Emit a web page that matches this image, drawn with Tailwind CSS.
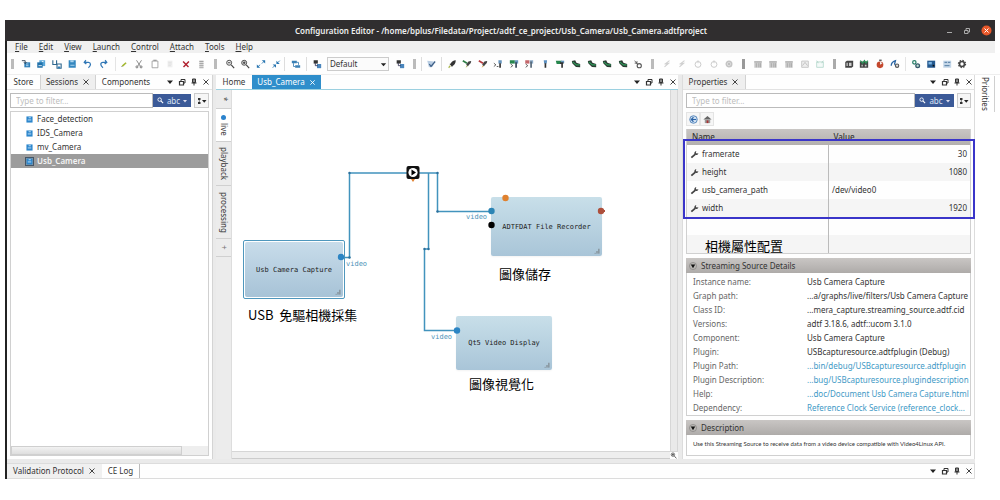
<!DOCTYPE html>
<html lang="en">
<head>
<meta charset="utf-8">
<title>Configuration Editor</title>
<script src="https://cdn.jsdelivr.net/npm/@tailwindcss/browser@4"></script>
</head>
<body class="bg-white font-['Noto_Sans','Noto_Sans_CJK_TC',sans-serif] text-[8px] leading-[14px] text-[#333]">
<svg class="hidden" aria-hidden="true">
  <symbol id="open" viewBox="0 0 12 12"><path d="M4 4h7v6H4z" fill="#2f7fb8"/><path d="M1 2h4M5 2v3M3.500 4L5 5.500 6.500 4" stroke="#234" fill="none"/><path d="M6 6h3M6 8h3" stroke="#bfe0f5"/></symbol>
  <symbol id="saveall" viewBox="0 0 12 12"><path d="M4 1.500h7v7H4z" fill="#5aa7d8"/><path d="M1.500 4h6.500v6.500H1.500z" fill="#2272ab"/><path d="M3 8h4M7 3h2" stroke="#fff"/></symbol>
  <symbol id="saveas" viewBox="0 0 12 12"><path d="M1 1.500v5h4.500v-5M6 6h5v5H6z" stroke="#2d668e" stroke-width="1.300" fill="none"/><path d="M7 9h3v2H7z" fill="#2f7fb8"/></symbol>
  <symbol id="save" viewBox="0 0 12 12"><path d="M2 1.500h8.500v9H2z" fill="#3487bf"/><path d="M4 1.500h4v2.500H4zM4 7h5v1H4z" fill="#a9d3ee"/></symbol>
  <symbol id="undo" viewBox="0 0 12 12"><path d="M3.500 1.500L1.500 4l2.500 2M2 4h4.500c3 0 3.500 4 0 6.500" stroke="#2f76b5" stroke-width="1.500" fill="none"/></symbol>
  <symbol id="redo" viewBox="0 0 12 12"><path d="M8.500 1.500l2 2.500L8 6M10 4H6c-3.500 0-3.500 4 0 6.500" stroke="#2f76b5" stroke-width="1.500" fill="none"/></symbol>
  <symbol id="pencil" viewBox="0 0 12 12"><path d="M4 8.500l4.500-4" stroke="#a3b82e" stroke-width="2"/><path d="M3 9.500l1-1" stroke="#555"/></symbol>
  <symbol id="cut" viewBox="0 0 12 12"><path d="M3 1.500l4.500 7M9 1.500L4.500 8.500" stroke="#777" fill="none"/><circle cx="3.500" cy="9.500" r="1.200" stroke="#666" fill="none"/><circle cx="8.500" cy="9.500" r="1.200" stroke="#666" fill="none"/></symbol>
  <symbol id="copy" viewBox="0 0 12 12"><path d="M2.500 2.500h7v8h-7z" stroke="#999" fill="#fff"/><path d="M4 1.500h4" stroke="#777"/></symbol>
  <symbol id="paste" viewBox="0 0 12 12"><path d="M3 2h6v8H3z" fill="#f0f0f0"/><path d="M4 4h4M4 6h4M4 8h3" stroke="#ddd"/></symbol>
  <symbol id="del" viewBox="0 0 12 12"><path d="M2.500 3l6.500 6.500M9.500 3L3 9.500" stroke="#b0202e" stroke-width="1.700"/></symbol>
  <symbol id="list" viewBox="0 0 12 12"><path d="M4 1.500h5v9H4z" fill="#ddd"/><path d="M4 3h5M4 5.500h5M4 8h5M4 10.500h5" stroke="#999"/></symbol>
  <symbol id="zout" viewBox="0 0 12 12"><circle cx="5" cy="4.500" r="3" stroke="#555" stroke-width="1.200" fill="#eee"/><path d="M3.500 4.500h3M7.500 7l3.500 4" stroke="#444" stroke-width="1.400"/></symbol>
  <symbol id="zin" viewBox="0 0 12 12"><circle cx="5" cy="4.500" r="3" stroke="#555" stroke-width="1.200" fill="#ddd"/><path d="M3.500 4.500h3M5 3v3M7.500 7l3.500 4" stroke="#444" stroke-width="1.400"/></symbol>
  <symbol id="fit" viewBox="0 0 12 12"><path d="M7 1.500h4v4zM1 6.500v4h4z" fill="#2674b0"/><path d="M9.500 3L7 5.500M2.500 9L5 7" stroke="#2674b0"/></symbol>
  <symbol id="fit2" viewBox="0 0 12 12"><path d="M6.500 2v4h4zM2 6.500h4v4z" fill="#2674b0"/><path d="M8 4.500L10.500 2M4.500 8L2 10.500" stroke="#2674b0"/></symbol>
  <symbol id="tree" viewBox="0 0 12 12"><path d="M1 2h6v3H1zM5 7.500h6v3H5z" fill="#3a80b5"/><path d="M3 5v4h2M9 7V4H7" stroke="#3a80b5" fill="none"/></symbol>
  <symbol id="flow" viewBox="0 0 12 12"><path d="M2 1.500h5v4H2z" fill="#333"/><path d="M6 6h5v5H6z" fill="#4a86bd"/><path d="M4 5v3h3" stroke="#335" fill="none"/></symbol>
  <symbol id="check" viewBox="0 0 12 12"><path d="M1.500 2l8 1-1 6-5 1z" fill="#b9cde2"/><path d="M4 6l2 3 5-6" stroke="#3d5f88" stroke-width="1.500" fill="none"/></symbol>
  <symbol id="rocket" viewBox="0 0 12 12"><path d="M10.500 1.500c-3 0-5 2-6 4L3 6l1.500 1.500L6 9.500 7 8c2-1 3.500-3 3.500-6.500z" fill="#333"/><path d="M4 8l-2 2.500" stroke="#a8b54a" stroke-width="1.500"/></symbol>
  <symbol id="rocketg" viewBox="0 0 12 12"><path d="M11 2.500c-3 0-4 1-5 3l-1 1.500L7 9l1.500-2C10 6 11 5 11 2.500z" fill="#444"/><path d="M1 2l5 3" stroke="#2e7d46" stroke-width="2"/><path d="M6 8l-1 2" stroke="#a8b54a"/></symbol>
  <symbol id="rocketr" viewBox="0 0 12 12"><path d="M11 2.500c-3 0-4 1-5 3l-1 1.500L7 9l1.500-2C10 6 11 5 11 2.500z" fill="#444"/><path d="M1 2l5 3" stroke="#b63a3f" stroke-width="2"/><path d="M6 8l-1 2" stroke="#e2a33a"/></symbol>
  <symbol id="step" viewBox="0 0 12 12"><path d="M1 5l2.500 2L1 9M4.500 9h2" stroke="#444" fill="none"/><path d="M6.500 1.500h4v4h-4z" fill="#6694bd"/><path d="M8.500 5v5.500" stroke="#333" stroke-width="2"/></symbol>
  <symbol id="stepg" viewBox="0 0 12 12"><path d="M1 1.500h6v4H1z" fill="#27864d"/><path d="M7 1.500h4v4H7z" fill="#6694bd"/><path d="M2 6l2.500 2L2 10" stroke="#444" fill="none"/><path d="M8.500 4v6.500" stroke="#345" stroke-width="2"/></symbol>
  <symbol id="stepr" viewBox="0 0 12 12"><path d="M1.500 1.500h5v4h-5z" fill="#c4666a"/><path d="M7 1.500h4v4H7z" fill="#8aa9c6"/><path d="M2 6l2.500 2L2 10" stroke="#444" fill="none"/><path d="M8.500 3v7.500" stroke="#567" stroke-width="2"/></symbol>
  <symbol id="torch" viewBox="0 0 12 12"><path d="M4.500 1.500h4l-.500 4H5z" fill="#5b8fc0"/><path d="M6.500 5v5.500" stroke="#333" stroke-width="2"/></symbol>
  <symbol id="torchg" viewBox="0 0 12 12"><path d="M1 2h7v4H2z" fill="#27864d"/><path d="M7 2h4v3H7z" fill="#6694bd"/><path d="M6 5h4M8.500 4v6.500" stroke="#333" stroke-width="2"/></symbol>
  <symbol id="chip" viewBox="0 0 12 12"><path d="M1 2.500l4-1 1.500 3L11 6v4L6 9.500 1.500 5z" fill="#2b3b33"/><path d="M2 3.500l4.500 3.500h4" stroke="#2e9c5a" stroke-width="1.300" fill="none"/></symbol>
  <symbol id="links" viewBox="0 0 12 12"><circle cx="7.500" cy="8" r="2.500" stroke="#555" stroke-width="1.300" fill="none"/><path d="M2 2l3 4M2 5h4M5 2.500L4 5" stroke="#555" fill="none"/></symbol>
  <symbol id="run" viewBox="0 0 12 12"><path d="M9 2L5 5h3L3 9.500M3 6h3" stroke="#d0d0d0" stroke-width="1.300" fill="none"/></symbol>
  <symbol id="ring" viewBox="0 0 12 12"><circle cx="6" cy="6.500" r="3.500" stroke="#ccc" stroke-width="1.200" fill="none"/><path d="M6 1.500V5" stroke="#ccc"/></symbol>
  <symbol id="disc" viewBox="0 0 12 12"><circle cx="6" cy="6" r="3.300" stroke="#c4c4c4" stroke-width="1.800" fill="#ddd"/><circle cx="6" cy="6" r="1" fill="#999"/></symbol>
  <symbol id="gwin" viewBox="0 0 12 12"><path d="M1.500 2.500h9v8h-9z" fill="#ccc"/><path d="M1.500 3.500h9M4 5v5M7 5v5M9 5v5" stroke="#a6a6a6" fill="none"/></symbol>
  <symbol id="gwin2" viewBox="0 0 12 12"><path d="M2 2.500h8v7.500H2z" stroke="#c2c2c2" fill="#eee"/><path d="M3 8l3-4 3 4" stroke="#bbb" fill="none"/></symbol>
  <symbol id="gwin3" viewBox="0 0 12 12"><path d="M2 3.500h8v6.500H2z" stroke="#b4d8cd" fill="#f4faf8"/><path d="M2 2l2 3M10 2L8 5" stroke="#aacfc3"/></symbol>
  <symbol id="film" viewBox="0 0 12 12"><path d="M1.500 3.500l2-1.500H11v7l-2 1.500H1.500z" fill="#444"/><path d="M3 4.500h1.500v4H3zM6 4.500h3v4H6z" fill="#ccc"/></symbol>
  <symbol id="cal" viewBox="0 0 12 12"><path d="M1 3h10v7.500H1z" fill="#444"/><path d="M1.500 2l3 3 2-3 2 3 2-3" stroke="#2c9259" stroke-width="1.500" fill="none"/><path d="M3 7h1.500v2H3zM7 7h2v2H7z" fill="#ccc"/></symbol>
  <symbol id="timer" viewBox="0 0 12 12"><circle cx="6" cy="7" r="4" fill="#c4482d"/><path d="M6 7V3l3 2z" fill="#eee"/><path d="M5 1.500h3" stroke="#444" stroke-width="1.500"/></symbol>
  <symbol id="meter" viewBox="0 0 12 12"><path d="M1.500 8c0-3 2-5 5-6l-1 4 2 3" stroke="#2d67a5" stroke-width="1.600" fill="none"/><circle cx="8.500" cy="8" r="2" stroke="#555" stroke-width="1.300" fill="#ddd"/></symbol>
  <symbol id="gearg" viewBox="0 0 12 12"><circle cx="4" cy="4" r="2" stroke="#2a7f69" stroke-width="1.500" fill="none"/><circle cx="8" cy="8" r="2.200" stroke="#38586c" stroke-width="1.600" fill="#bfe3d0"/></symbol>
  <symbol id="screen" viewBox="0 0 12 12"><path d="M1.500 2h9.500v8.500H1.500z" fill="#24598f"/><path d="M3 3.500h4v3H3z" fill="#7cb4e0"/><path d="M8 7h2v2H8z" fill="#111"/></symbol>
  <symbol id="screen2" viewBox="0 0 12 12"><path d="M1.500 2h9.500v8.500H1.500z" fill="#c3d6e8"/><path d="M3 4h3M7 4h3M3 8h6" stroke="#3d6a94"/></symbol>
  <symbol id="gear" viewBox="0 0 12 12"><circle cx="6" cy="6" r="4.300" stroke="#444" stroke-width="1.400" stroke-dasharray="1.700 1.670" fill="none"/><circle cx="6" cy="6" r="3" stroke="#444" stroke-width="2" fill="#fff"/></symbol>
  <symbol id="down" viewBox="0 0 8 8"><path d="M1 2.500h6L4 6z" fill="#222"/></symbol>
  <symbol id="float" viewBox="0 0 8 8"><path d="M3 1.500h4v3.500H3z" fill="#fff" stroke="#333"/><path d="M1.500 3.500h4V7h-4z" fill="#fff" stroke="#333" stroke-width="1.200"/></symbol>
  <symbol id="pin" viewBox="0 0 8 8"><path d="M2.500 1h3v3.500h-3z" fill="#888" stroke="#333"/><path d="M1.500 5h5M4 5v2.500" stroke="#333"/></symbol>
  <symbol id="x" viewBox="0 0 8 8"><path d="M1.500 1.500l5 5M6.500 1.500l-5 5" stroke="#444" fill="none"/></symbol>
  <symbol id="find" viewBox="0 0 8 8"><circle cx="3" cy="3" r="2" stroke="#fff" fill="none"/><path d="M4.500 4.500L7 7" stroke="#fff" stroke-width="1.300"/></symbol>
  <symbol id="opts" viewBox="0 0 10 8"><path d="M1 1h2.500v2H1zM1 5h2.500v2H1z" fill="#333"/><path d="M2.300 3v2" stroke="#777"/><path d="M5 3h4.500L7.250 5.800z" fill="#222"/></symbol>
  <symbol id="session" viewBox="0 0 8 8"><path d="M.500.500h7v7h-7z" fill="#2c86cc"/><path d="M2 4.500h4M3 2h2.500" stroke="#cfe8fa"/></symbol>
  <symbol id="wrench" viewBox="0 0 10 10"><path d="M1.500 8.500L6 4.500" stroke="#444" stroke-width="2"/><path d="M7 1C5 1.500 4.500 3 5 4.500L6.500 5.500C8 5.800 9 5 9.300 3.500L7.500 4 6.500 3z" fill="#444"/></symbol>
  <symbol id="fold" viewBox="0 0 9 9"><circle cx="4.500" cy="4.500" r="4" fill="#bab8b5" stroke="#807d7a" stroke-width=".700"/><path d="M2 2.700h5L4.500 7z" fill="#111"/></symbol>
  <symbol id="grip" viewBox="0 0 8 8"><path d="M1.500 7.500v-1M4 7.500V4M6.500 7.500V1" stroke="#666"/></symbol>
</svg>

<div class="flex h-screen flex-col pt-5 pb-[21px] pl-[5px]">
  <header class="mr-[5px] flex h-[21px] shrink-0 items-center bg-[#302e2f] text-white">
    <div class="w-14"></div>
    <h1 class="flex-1 pl-0.5 text-center font-semibold whitespace-nowrap text-[#eee]">Configuration Editor - /home/bplus/Filedata/Project/adtf_ce_project/Usb_Camera/Usb_Camera.adtfproject</h1>
    <div class="flex w-14 items-center justify-end gap-2.5 pr-[3px]">
      <button aria-label="Minimize"><svg class="size-2" viewBox="0 0 8 8"><path d="M2 5.500h5" stroke="#aaa"/></svg></button>
      <button aria-label="Restore"><svg class="size-2" viewBox="0 0 8 8"><path d="M1.500 3.500h3.500V6.500H1.500zM3 3V1.500h3.500V5H5" stroke="#aaa" fill="none"/></svg></button>
      <button aria-label="Close"><svg class="size-[11px]" viewBox="0 0 11 11"><circle cx="5.500" cy="5.500" r="5" fill="#e8582a"/><path d="M3.500 3.500l4 4M7.500 3.500l-4 4" stroke="#fff"/></svg></button>
    </div>
  </header>

  <div class="flex min-h-0 flex-1 flex-col border-l-2 border-[#222]">
    <nav class="mr-[5px] flex h-3 shrink-0 items-center gap-[11px] bg-[#f0f0f0] pl-2 leading-3">
      <button><u>F</u>ile</button><button><u>E</u>dit</button><button><u>V</u>iew</button><button><u>L</u>aunch</button><button><u>C</u>ontrol</button><button><u>A</u>ttach</button><button><u>T</u>ools</button><button><u>H</u>elp</button>
    </nav>

    <div class="flex h-[22px] shrink-0 items-center border-b border-[#eee] bg-[#fefefe] [&_button]:flex [&_button]:flex-1 [&_button]:justify-center [&_button_svg]:size-[10px]">
      <i class="ml-1 mr-1 h-2.5 w-[3px] bg-[#bbb]"></i>
      <div class="flex w-[93px]">
        <button aria-label="Open"><svg><use href="#open"/></svg></button><button aria-label="Save all"><svg><use href="#saveall"/></svg></button><button aria-label="Save as"><svg><use href="#saveas"/></svg></button><button aria-label="Save"><svg><use href="#save"/></svg></button><button aria-label="Undo"><svg><use href="#undo"/></svg></button><button aria-label="Redo"><svg><use href="#redo"/></svg></button>
      </div>
      <i class="ml-1 h-3.5 w-px bg-[#e4e4e4]"></i>
      <div class="flex w-[93px]">
        <button aria-label="Edit"><svg><use href="#pencil"/></svg></button><button aria-label="Cut"><svg><use href="#cut"/></svg></button><button aria-label="Copy"><svg><use href="#copy"/></svg></button><button aria-label="Paste"><svg><use href="#paste"/></svg></button><button aria-label="Delete"><svg><use href="#del"/></svg></button><button aria-label="Select all"><svg><use href="#list"/></svg></button>
      </div>
      <i class="mx-[5px] h-2.5 w-[3px] bg-[#bbb]"></i>
      <div class="flex w-[62px]">
        <button aria-label="Zoom out"><svg><use href="#zout"/></svg></button><button aria-label="Zoom in"><svg><use href="#zin"/></svg></button><button aria-label="Fit"><svg><use href="#fit"/></svg></button><button aria-label="Shrink"><svg><use href="#fit2"/></svg></button>
      </div>
      <i class="mr-[3px] h-3.5 w-px bg-[#ddd]"></i>
      <div class="flex w-4"><button aria-label="Layout"><svg><use href="#tree"/></svg></button></div>
      <i class="mx-[2px] h-3.5 w-px bg-[#ddd]"></i>
      <div class="flex w-4"><button aria-label="Routing"><svg><use href="#flow"/></svg></button></div>
      <div class="relative ml-[2px] flex">
        <select aria-label="Configuration" class="h-[14px] w-[62px] appearance-none border border-[#ccc] bg-[#fbfbfb] pl-[2px] leading-3"><option>Default</option></select>
        <svg class="pointer-events-none absolute top-[4px] right-[2px] size-[7px]"><use href="#down"/></svg>
      </div>
      <div class="ml-[3px] flex w-4"><button aria-label="Edit configuration"><svg><use href="#flow"/></svg></button></div>
      <i class="mx-[5px] h-2.5 w-[3px] bg-[#bbb]"></i>
      <i class="mr-px h-3.5 w-px bg-[#ddd]"></i>
      <div class="flex w-4"><button aria-label="Validate"><svg><use href="#check"/></svg></button></div>
      <i class="mx-[2px] h-3.5 w-px bg-[#ddd]"></i>
      <div class="flex w-[202px]">
        <button aria-label="Launch"><svg><use href="#rocket"/></svg></button><button aria-label="Launch run"><svg><use href="#rocketg"/></svg></button><button aria-label="Launch debug"><svg><use href="#rocketr"/></svg></button><button aria-label="Console"><svg><use href="#step"/></svg></button><button aria-label="Console run"><svg><use href="#stepg"/></svg></button><button aria-label="Console debug"><svg><use href="#stepr"/></svg></button><button aria-label="Control"><svg><use href="#torch"/></svg></button><button aria-label="Control run"><svg><use href="#torchg"/></svg></button><button aria-label="Target 1"><svg><use href="#chip"/></svg></button><button aria-label="Target 2"><svg><use href="#chip"/></svg></button><button aria-label="Target 3"><svg><use href="#chip"/></svg></button><button aria-label="Target 4"><svg><use href="#chip"/></svg></button><button aria-label="Attach"><svg><use href="#links"/></svg></button>
      </div>
      <i class="mx-[5px] h-2.5 w-[3px] bg-[#bbb]"></i>
      <div class="flex w-[78px]">
        <button aria-label="Shutdown" disabled><svg><use href="#run"/></svg></button><button aria-label="Startup" disabled><svg><use href="#run"/></svg></button><button aria-label="Init" disabled><svg><use href="#ring"/></svg></button><button aria-label="Start" disabled><svg><use href="#ring"/></svg></button><button aria-label="Record" disabled><svg><use href="#disc"/></svg></button>
      </div>
      <i class="mx-[5px] h-2.5 w-[3px] bg-[#999]"></i>
      <div class="flex w-[78px]">
        <button aria-label="Window 1" disabled><svg><use href="#gwin"/></svg></button><button aria-label="Window 2" disabled><svg><use href="#gwin"/></svg></button><button aria-label="Window 3" disabled><svg><use href="#gwin"/></svg></button><button aria-label="Window 4" disabled><svg><use href="#gwin2"/></svg></button><button aria-label="Window 5" disabled><svg><use href="#gwin3"/></svg></button>
      </div>
      <i class="mx-[5px] h-2.5 w-[3px] bg-[#aaa]"></i>
      <div class="flex w-[62px]">
        <button aria-label="Video"><svg><use href="#film"/></svg></button><button aria-label="Schedule"><svg><use href="#cal"/></svg></button><button aria-label="Timer"><svg><use href="#timer"/></svg></button><button aria-label="Profiler"><svg><use href="#meter"/></svg></button>
      </div>
      <i class="mx-[2px] h-3.5 w-px bg-[#e4e4e4]"></i>
      <div class="flex w-[62px]">
        <button aria-label="Plugins"><svg><use href="#gearg"/></svg></button><button aria-label="Display"><svg><use href="#screen"/></svg></button><button aria-label="Report"><svg><use href="#screen2"/></svg></button><button aria-label="Settings"><svg><use href="#gear"/></svg></button>
      </div>
    </div>

    <div class="flex min-h-0 flex-1">
      <div class="flex min-w-0 flex-1 flex-col">
        <main class="flex min-h-0 flex-1 bg-[#eaeaea] pb-1">
          <!-- sessions dock -->
          <section class="flex w-[206px] flex-col border-r border-[#d4d4d4] bg-[#fefefe]">
            <div class="flex h-[15px] shrink-0 items-stretch border-b border-[#e2e2e2]">
              <button class="w-[33px]">Store</button>
              <button class="flex w-14 items-center justify-center gap-1 border-x border-[#d2d2d2] bg-[#efefef]">Sessions <svg class="size-2"><use href="#x"/></svg></button>
              <button class="w-[60px]">Components</button>
              <div class="flex flex-1 items-center justify-end gap-1 pr-[2px] [&_svg]:size-2">
                <button aria-label="Menu"><svg><use href="#down"/></svg></button><button aria-label="Float"><svg><use href="#float"/></svg></button><button aria-label="Pin"><svg><use href="#pin"/></svg></button><button aria-label="Close"><svg><use href="#x"/></svg></button>
              </div>
            </div>
            <div class="mx-[3px] mt-[3px] flex h-[15px] shrink-0 items-center">
              <input aria-label="Filter sessions" placeholder="Type to filter..." class="h-[15px] min-w-0 flex-1 border border-[#bbb] bg-white pl-[5px] placeholder:text-[#bdbdbd]">
              <button class="flex h-[13px] w-[38px] items-center justify-center gap-[3px] bg-[#3b5a98] leading-[13px] text-[#dbe5f5]"><svg class="size-[7px]"><use href="#find"/></svg>abc<svg class="size-1" viewBox="0 0 4 4"><path d="M0 1h4L2 3.500z" fill="#dde"/></svg></button>
              <button aria-label="Options" class="ml-[3px] flex h-[15px] w-[15px] items-center justify-center border border-[#ccc] bg-[#f6f6f6]"><svg class="h-2 w-2.5"><use href="#opts"/></svg></button>
            </div>
            <div class="mx-[3px] mt-[3px] mb-[3px] flex flex-1 flex-col border border-[#d0d0d0] bg-white text-[#333]">
              <ul class="flex-1 [&>li]:flex [&>li]:h-3.5 [&>li]:items-center [&>li]:gap-1 [&>li]:pl-[15px] [&_svg]:size-[7px]">
                <li><svg><use href="#session"/></svg>Face_detection</li>
                <li><svg><use href="#session"/></svg>IDS_Camera</li>
                <li><svg><use href="#session"/></svg>mv_Camera</li>
                <li class="bg-[#9c9c9c] font-semibold text-[#f4f4f4]"><svg class="outline outline-[#456]"><use href="#session"/></svg>Usb_Camera</li>
              </ul>
              <div class="h-[9px] bg-[#eee]"><div class="h-[9px] w-[87%] border border-[#cfcfcf] bg-linear-to-b from-[#f2f2f2] to-[#dedede]"></div></div>
            </div>
          </section>

          <!-- graph editor -->
          <section class="ml-[3px] flex min-w-0 flex-1 flex-col bg-[#fefefe]">
            <div class="flex h-[15px] shrink-0 border-b border-[#9bd0e0]">
              <button class="w-9">Home</button>
              <button class="flex w-[69px] items-center justify-center gap-1 bg-[#2f8ecb] text-white">Usb_Camera <svg class="size-[7px]" viewBox="0 0 8 8"><path d="M1.500 1.500l5 5M6.500 1.500l-5 5" stroke="#fff"/></svg></button>
              <div class="flex flex-1 items-center justify-end gap-1 pr-px [&_svg]:size-2">
                <button aria-label="Menu"><svg><use href="#down"/></svg></button><button aria-label="Float"><svg><use href="#float"/></svg></button><button aria-label="Pin"><svg><use href="#pin"/></svg></button><button aria-label="Close"><svg><use href="#x"/></svg></button>
              </div>
            </div>
            <div class="flex min-h-0 flex-1">
              <div class="flex w-4 flex-col border-r border-[#ddd] bg-[#ececec] [&>button]:flex [&>button]:items-center [&>button]:justify-center [&>button]:border-b [&>button]:border-[#d0d0d0] [&>button]:[writing-mode:vertical-rl]">
                <button class="h-[19px] text-[#555]">*</button>
                <button class="h-[33px] gap-[3px] bg-white"><i class="size-[5px] rounded-full bg-[#2b83cd]"></i>live</button>
                <button class="h-11">playback</button>
                <button class="h-[53px]">processing</button>
                <button class="h-[18px] text-[#777]">+</button>
              </div>
              <div class="flex min-w-0 flex-1 flex-col">
                <div class="flex min-h-0 flex-1">
                  <div class="relative flex-1 overflow-hidden bg-white font-['DejaVu_Sans_Mono',monospace] text-[7px] leading-[10px] text-[#222]">
                    <div class="absolute top-[150px] left-[11px] h-[59px] w-[102px] rounded-xs border border-[#4f97bd] bg-white p-px"><div class="flex h-full items-center justify-center rounded-xs bg-linear-to-b from-[#c8dcea] to-[#a7c3d7]">Usb Camera Capture</div></div>
                    <div class="absolute top-[107px] left-[259px] flex h-[59px] w-[111px] items-center justify-center rounded-xs bg-linear-to-b from-[#c8dfe9] to-[#a9c5d8] shadow-xs">ADTFDAT File Recorder</div>
                    <div class="absolute top-[226px] left-[224px] flex h-[54px] w-[96px] items-center justify-center rounded-xs bg-linear-to-b from-[#c8dfe9] to-[#a9c5d8] shadow-xs">Qt5 Video Display</div>
                    <svg class="absolute top-0 left-0 h-[361px] w-[438px]" viewBox="0 0 438 361" fill="none">
                      <g stroke="#4293bd" stroke-width="1.500"><path d="M109 167.500h8.500v-84.500H205.500v38.500H260"/><path d="M196.500 83v76h-4v81.500H226"/></g>
                      <g fill="#2b6f9c"><circle cx="117.500" cy="167.500" r="1.200"/><circle cx="117.500" cy="83" r="1.200"/><circle cx="205.500" cy="83" r="1.200"/><circle cx="205.500" cy="121.500" r="1.200"/><circle cx="196.500" cy="159" r="1.200"/><circle cx="192.500" cy="159" r="1.200"/></g>
                      <circle cx="109" cy="167" r="3.200" fill="#2c85c4"/><circle cx="259.500" cy="121" r="3.200" fill="#2c85b5"/><circle cx="225" cy="240.500" r="3.200" fill="#2c85c4"/>
                      <circle cx="259.500" cy="135" r="3.200" fill="#000"/><circle cx="273.500" cy="108" r="3.200" fill="#e0812f"/><path d="M369 121h4" stroke="#ad4f3b" stroke-width="2"/><circle cx="369" cy="121" r="3.200" fill="#ad4f3b"/>
                      <path d="M179 89h4l-2 3z" fill="#e0812f"/><rect x="174.500" y="76" width="13" height="13" rx="2" fill="#111"/><circle cx="181" cy="82.500" r="4.600" fill="#fff"/><path d="M179.500 79.500v6l4.500-3z" fill="#000"/>
                    </svg>
                    <span class="absolute top-[169px] left-[114px] text-[#4b93b8]">video</span>
                    <span class="absolute top-[122px] left-[234px] text-[#4b93b8]">video</span>
                    <span class="absolute top-[242px] left-[199px] text-[#4b93b8]">video</span>
                    <svg class="absolute top-[199px] left-[103px] size-1.5"><use href="#grip"/></svg>
                    <svg class="absolute top-[158px] left-[362px] size-1.5"><use href="#grip"/></svg>
                    <svg class="absolute top-[272px] left-[312px] size-1.5"><use href="#grip"/></svg>
                    <div class="font-['Noto_Sans_CJK_TC',sans-serif] text-[13px] leading-5 whitespace-pre text-black">
                      <p class="absolute top-[215px] left-4">USB  免驅相機採集</p>
                      <p class="absolute top-[174px] left-[267px]">圖像儲存</p>
                      <p class="absolute top-[284px] left-[237px]">圖像視覺化</p>
                    </div>
                  </div>
                  <div class="w-2 border-x border-[#d6d6d6] bg-[#e9e9e9]"></div>
                </div>
                <div class="flex h-2 border-t border-[#d6d6d6]">
                  <div class="flex-1 border-b border-[#ccc] bg-[#eee]"></div>
                  <button aria-label="Overview" class="flex w-2"><svg class="size-[7px]"><use href="#zin"/></svg></button>
                </div>
              </div>
            </div>
          </section>

          <!-- properties dock -->
          <section class="relative ml-1 flex w-[293px] flex-col border-x border-[#dcdcdc] bg-[#fefefe]">
            <div class="flex h-[15px] shrink-0 border-b border-[#e2e2e2]">
              <button class="flex w-[63px] items-center justify-center gap-1 border-r border-[#d2d2d2] bg-[#efefef]">Properties <svg class="size-2"><use href="#x"/></svg></button>
              <div class="flex flex-1 items-center justify-end gap-1 pr-px [&_svg]:size-2">
                <button aria-label="Menu"><svg><use href="#down"/></svg></button><button aria-label="Float"><svg><use href="#float"/></svg></button><button aria-label="Pin"><svg><use href="#pin"/></svg></button><button aria-label="Close"><svg><use href="#x"/></svg></button>
              </div>
            </div>
            <div class="mx-[3px] mt-[3px] flex h-[15px] shrink-0 items-center">
              <input aria-label="Filter properties" placeholder="Type to filter..." class="h-[15px] min-w-0 flex-1 border border-[#bbb] bg-white pl-[5px] placeholder:text-[#bdbdbd]">
              <button class="flex h-[13px] w-[39px] items-center justify-center gap-[3px] bg-[#3b5a98] leading-[13px] text-[#dbe5f5]"><svg class="size-[7px]"><use href="#find"/></svg>abc<svg class="size-1" viewBox="0 0 4 4"><path d="M0 1h4L2 3.500z" fill="#dde"/></svg></button>
              <button aria-label="Options" class="ml-[3px] flex h-[15px] w-[14px] items-center justify-center border border-[#ccc] bg-[#f6f6f6]"><svg class="h-2 w-2.5"><use href="#opts"/></svg></button>
            </div>
            <div class="mx-[3px] mt-1 flex h-[14px] shrink-0 [&>button]:flex [&>button]:w-[14px] [&>button]:items-center [&>button]:justify-center [&>button]:border [&>button]:border-[#e4e4e4] [&>button]:bg-[#f6f6f6]">
              <button aria-label="Back"><svg class="size-[9px]" viewBox="0 0 10 10"><circle cx="5" cy="5" r="4.200" fill="#cfe0f2" stroke="#4d80b8"/><path d="M8 5H3M5 2.500L2.500 5 5 7.500" stroke="#2a62a5" fill="none" stroke-width="1.200"/></svg></button>
              <button aria-label="Home"><svg class="size-[9px]" viewBox="0 0 10 10"><path d="M.5 5L5 1l4.500 4z" fill="#666"/><path d="M2 5h6v4H2z" fill="#999"/><path d="M4 6h2v3H4z" fill="#a33"/></svg></button>
            </div>
            <div class="mx-[3px] mt-[3px] h-[125px] shrink-0 border border-t-0 border-[#d0d0d0]">
              <table class="w-full table-fixed [&_td]:h-[18px] [&_td]:px-[3px] [&_td]:py-0 [&_td]:align-middle [&_td+td]:border-l [&_td+td]:border-[#bbb] [&_td_svg]:mr-[3px] [&_td_svg]:inline [&_td_svg]:size-[9px] [&_tbody_tr:nth-child(even)]:bg-[#f5f5f5]">
                <thead><tr class="h-4 bg-linear-to-b from-[#c9c6c4] to-[#b3b0ae] text-left"><th class="pl-[5px] font-medium">Name</th><th class="pl-[5px] font-medium">Value</th></tr></thead>
                <tbody>
                  <tr><td><svg><use href="#wrench"/></svg>framerate</td><td class="text-right">30</td></tr>
                  <tr><td><svg><use href="#wrench"/></svg>height</td><td class="text-right">1080</td></tr>
                  <tr><td><svg><use href="#wrench"/></svg>usb_camera_path</td><td>/dev/video0</td></tr>
                  <tr><td><svg><use href="#wrench"/></svg>width</td><td class="text-right">1920</td></tr>
                  <tr><td></td><td></td></tr>
                  <tr><td></td><td></td></tr>
                </tbody>
              </table>
            </div>
            <div class="pointer-events-none absolute top-16 -right-px left-0 h-20 border-2 border-[#3a35c9]"></div>
            <p class="absolute top-[161px] left-[22px] font-['Noto_Sans_CJK_TC',sans-serif] text-[13px] leading-5 text-black">相機屬性配置</p>

            <h2 class="mx-[3px] mt-1 flex h-[15px] shrink-0 items-center gap-1 bg-linear-to-b from-[#c9c6c4] to-[#aeaba9] pl-[3px]"><svg class="size-2"><use href="#fold"/></svg>Streaming Source Details</h2>
            <dl class="mx-[3px] grid shrink-0 grid-cols-[114px_1fr] border border-t-0 border-[#d0d0d0] bg-white pt-[2px] pl-1.5 whitespace-nowrap [&_a]:text-[#3f9ac6] [&_dt]:text-[#666]">
              <dt>Instance name:</dt><dd>Usb Camera Capture</dd>
              <dt>Graph path:</dt><dd>...a/graphs/live/filters/Usb Camera Capture</dd>
              <dt>Class ID:</dt><dd>...mera_capture.streaming_source.adtf.cid</dd>
              <dt>Versions:</dt><dd>adtf 3.18.6, adtf::ucom 3.1.0</dd>
              <dt>Component:</dt><dd>Usb Camera Capture</dd>
              <dt>Plugin:</dt><dd>USBcapturesource.adtfplugin (Debug)</dd>
              <dt>Plugin Path:</dt><dd><a href="#">...bin/debug/USBcapturesource.adtfplugin</a></dd>
              <dt>Plugin Description:</dt><dd><a href="#">...bug/USBcapturesource.plugindescription</a></dd>
              <dt>Help:</dt><dd><a href="#">...doc/Document Usb Camera Capture.html</a></dd>
              <dt>Dependency:</dt><dd><a href="#">Reference Clock Service (reference_clock...</a></dd>
            </dl>
            <h2 class="mx-[3px] mt-1 flex h-[15px] shrink-0 items-center gap-1 bg-linear-to-b from-[#c9c6c4] to-[#aeaba9] pl-[3px]"><svg class="size-2"><use href="#fold"/></svg>Description</h2>
            <p class="mx-[3px] mb-[3px] flex-1 border border-t-0 border-[#d0d0d0] bg-white pt-[2px] pl-1.5 font-['Lato',sans-serif] text-[6px] whitespace-nowrap">Use this Streaming Source to receive data from a video device compatible with Video4Linux API.</p>
          </section>
        </main>

        <footer class="flex h-4 shrink-0 border-y border-r border-[#dcdcdc] bg-[#fefefe]">
          <button class="flex w-[95px] items-center justify-center gap-1 bg-[#f0f0f0]">Validation Protocol <svg class="size-2"><use href="#x"/></svg></button>
          <button class="w-[38px] border-r border-[#bbb]">CE Log</button>
          <div class="flex flex-1 items-center justify-end gap-1 pr-px [&_svg]:size-2">
            <button aria-label="Menu"><svg><use href="#down"/></svg></button><button aria-label="Float"><svg><use href="#float"/></svg></button><button aria-label="Pin"><svg><use href="#pin"/></svg></button><button aria-label="Close"><svg><use href="#x"/></svg></button>
          </div>
        </footer>
      </div>
      <aside class="w-[25px] pr-[5px]">
        <button class="mt-px flex h-9 w-full items-center justify-center border-r border-[#d0d0d0] [writing-mode:vertical-rl]">Priorities</button>
      </aside>
    </div>
  </div>
</div>
</body>
</html>
